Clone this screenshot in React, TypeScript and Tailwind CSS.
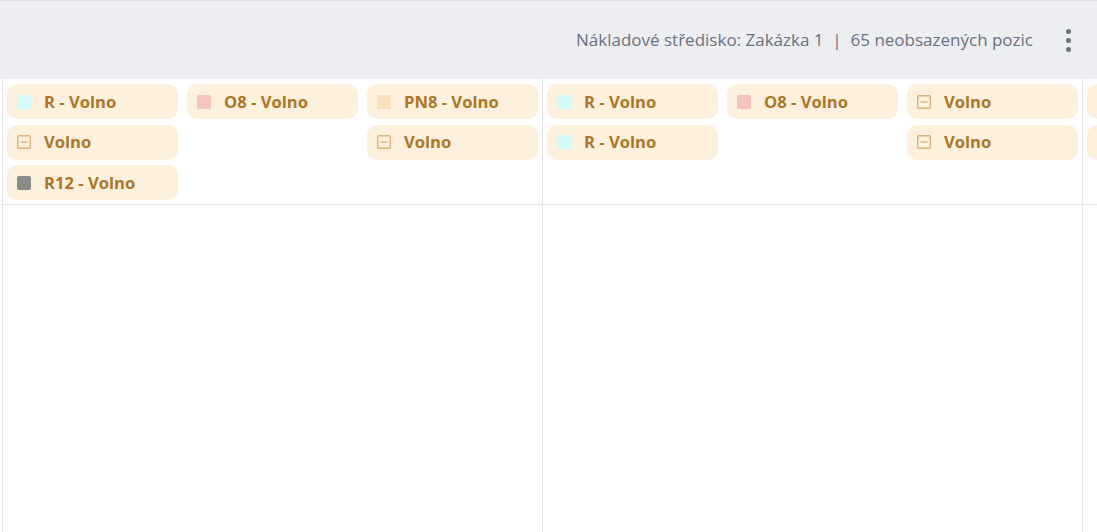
import React from 'react';

type Slot = { label: string; kind: 'cyan' | 'pink' | 'peach' | 'gray' | 'empty' };

const swatch: Record<Slot['kind'], string> = {
  cyan: 'bg-[#d3faf8]',
  pink: 'bg-[#f4c4c2]',
  peach: 'bg-[#f9e0bf]',
  gray: 'bg-[#8b8b8b]',
  empty: '',
};

// three columns of three sub-columns each
const columns: Slot[][][] = [
  [
    [
      { label: 'R - Volno', kind: 'cyan' },
      { label: 'Volno', kind: 'empty' },
      { label: 'R12 - Volno', kind: 'gray' },
    ],
    [{ label: 'O8 - Volno', kind: 'pink' }],
    [
      { label: 'PN8 - Volno', kind: 'peach' },
      { label: 'Volno', kind: 'empty' },
    ],
  ],
  [
    [
      { label: 'R - Volno', kind: 'cyan' },
      { label: 'R - Volno', kind: 'cyan' },
    ],
    [{ label: 'O8 - Volno', kind: 'pink' }],
    [
      { label: 'Volno', kind: 'empty' },
      { label: 'Volno', kind: 'empty' },
    ],
  ],
  [
    [
      { label: 'R - Volno', kind: 'pink' },
      { label: 'Volno', kind: 'empty' },
    ],
    [],
    [],
  ],
];

function MinusBox() {
  return (
    <svg width="14" height="14" viewBox="0 0 14 14" className="shrink-0">
      <rect x="0.75" y="0.75" width="12.5" height="12.5" rx="1" fill="none" stroke="#dcb27f" strokeWidth="1.5" />
      <line x1="3.5" y1="7" x2="10.5" y2="7" stroke="#dcb27f" strokeWidth="1.5" />
    </svg>
  );
}

function Pill({ slot }: { slot: Slot }) {
  return (
    <div className="h-[35px] rounded-[10px] bg-[#fdf1de] flex items-center pl-[10px] gap-[13px] overflow-hidden">
      {slot.kind === 'empty' ? (
        <MinusBox />
      ) : (
        <span className={`w-[14px] h-[14px] rounded-[2px] shrink-0 ${swatch[slot.kind]}`} />
      )}
      <span className="text-[16.6px] font-bold text-[#ad7627] whitespace-nowrap leading-none pt-[1px]">{slot.label}</span>
    </div>
  );
}

export default function App() {
  return (
    <div className="w-[1097px] h-[532px] overflow-hidden bg-white" style={{ fontFamily: '"Open Sans", sans-serif' }}>
      <div className="h-[79px] bg-[#edeef2] border-t border-[#dcdee3] flex items-center justify-end pr-[26px]">
        <span className="text-[17px] text-[#6b7280]">
          Nákladové středisko: Zakázka 1&nbsp;&nbsp;|&nbsp;&nbsp;65 neobsazených pozic
        </span>
        <div className="ml-[33px] flex flex-col gap-[4px] items-center">
          <span className="w-[5px] h-[5px] rounded-full bg-[#6b7280]" />
          <span className="w-[5px] h-[5px] rounded-full bg-[#6b7280]" />
          <span className="w-[5px] h-[5px] rounded-full bg-[#6b7280]" />
        </div>
      </div>
      <div className="flex pl-[2px]">
        {columns.map((col, ci) => (
          <div key={ci} className="w-[540px] shrink-0 border-l border-[#e6e6e6] flex flex-col">
            <div className="grid grid-cols-3 gap-x-[9px] px-[4px] pt-[5px] pb-[4px] h-[126px] border-b border-[#e6e6e6]">
              {col.map((sub, si) => (
                <div key={si} className="flex flex-col gap-[5.5px]">
                  {sub.map((slot, k) => (
                    <Pill key={k} slot={slot} />
                  ))}
                </div>
              ))}
            </div>
            <div className="h-[400px]" />
          </div>
        ))}
      </div>
    </div>
  );
}
